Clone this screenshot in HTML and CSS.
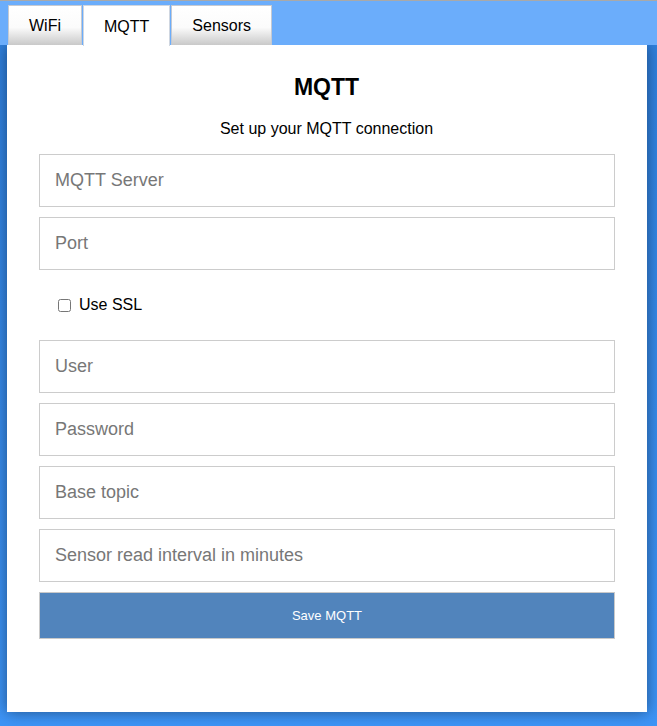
FILE: index.html
```html
<!DOCTYPE html>
<html>
<head>
<meta charset="utf-8">
<title>MQTT</title>
<link rel="stylesheet" href="styles.css">
</head>
<body>
<div class="header">
  <div class="tab">WiFi</div>
  <div class="tab active">MQTT</div>
  <div class="tab">Sensors</div>
</div>
<div class="card">
  <h2 class="title">MQTT</h2>
  <p class="subtitle">Set up your MQTT connection</p>
  <form class="form">
    <input class="field" type="text" placeholder="MQTT Server">
    <input class="field" type="text" placeholder="Port">
    <label class="check-row"><input class="check" type="checkbox"><span>Use SSL</span></label>
    <input class="field" type="text" placeholder="User">
    <input class="field" type="password" placeholder="Password">
    <input class="field" type="text" placeholder="Base topic">
    <input class="field" type="text" placeholder="Sensor read interval in minutes">
    <button class="save" type="button">Save MQTT</button>
  </form>
</div>
</body>
</html>
```
FILE: styles.css
```css
html, body {
  margin: 0;
  padding: 0;
}
body {
  border-top: 1px solid #a9a9a9;
  background: linear-gradient(#2f7fdc, #3d94f6);
  font-family: "Liberation Sans", Arial, sans-serif;
  min-height: 725px;
  overflow: hidden;
}
.header {
  height: 44px;
  background: #6badfb;
  display: flex;
  align-items: flex-end;
  padding-left: 8px;
  gap: 1px;
  position: relative;
  z-index: 2;
}
.tab {
  height: 38px;
  padding: 1px 20px 0;
  border: 1px solid #c4c9d2;
  border-bottom: 0;
  background: linear-gradient(#ffffff 0%, #fbfbfb 55%, #c9c9c9 100%);
  font-size: 16px;
  color: #000;
  display: flex;
  align-items: center;
  box-sizing: content-box;
}
.tab.active {
  background: #fff;
  height: 39px;
  margin-bottom: -1px;
  border-color: #cfd6e0;
}
.card {
  position: relative;
  z-index: 1;
  margin-left: 7px;
  width: 640px;
  height: 667px;
  box-sizing: border-box;
  background: #fff;
  box-shadow: 0 0 14px rgba(0, 0, 0, 0.45);
  padding: 29px 33px 0 32px;
}
.title {
  margin: 0;
  font-size: 23px;
  line-height: 26px;
  font-weight: bold;
  text-align: center;
  color: #000;
}
.subtitle {
  margin: 19px 0 0;
  font-size: 16px;
  line-height: 20px;
  text-align: center;
  color: #000;
}
.form {
  margin-top: 15px;
  display: flex;
  flex-direction: column;
  gap: 10px;
}
.field {
  box-sizing: border-box;
  width: 576px;
  height: 53px;
  margin: 0;
  border: 1px solid #cccccc;
  padding: 0 15px;
  font-family: "Liberation Sans", Arial, sans-serif;
  font-size: 18px;
  color: #333;
  outline: none;
}
.field::placeholder {
  color: #777;
}
.check-row {
  height: 50px;
  display: flex;
  align-items: center;
  padding-left: 19px;
  font-size: 16px;
  color: #000;
}
.check {
  width: 13px;
  height: 13px;
  margin: 0 8px 0 0;
}
.save {
  box-sizing: border-box;
  width: 576px;
  height: 47px;
  margin: 0;
  background: #5184bc;
  border: 1px solid #c9c9c9;
  color: #fff;
  font-family: "Liberation Sans", Arial, sans-serif;
  font-size: 13px;
}
```
